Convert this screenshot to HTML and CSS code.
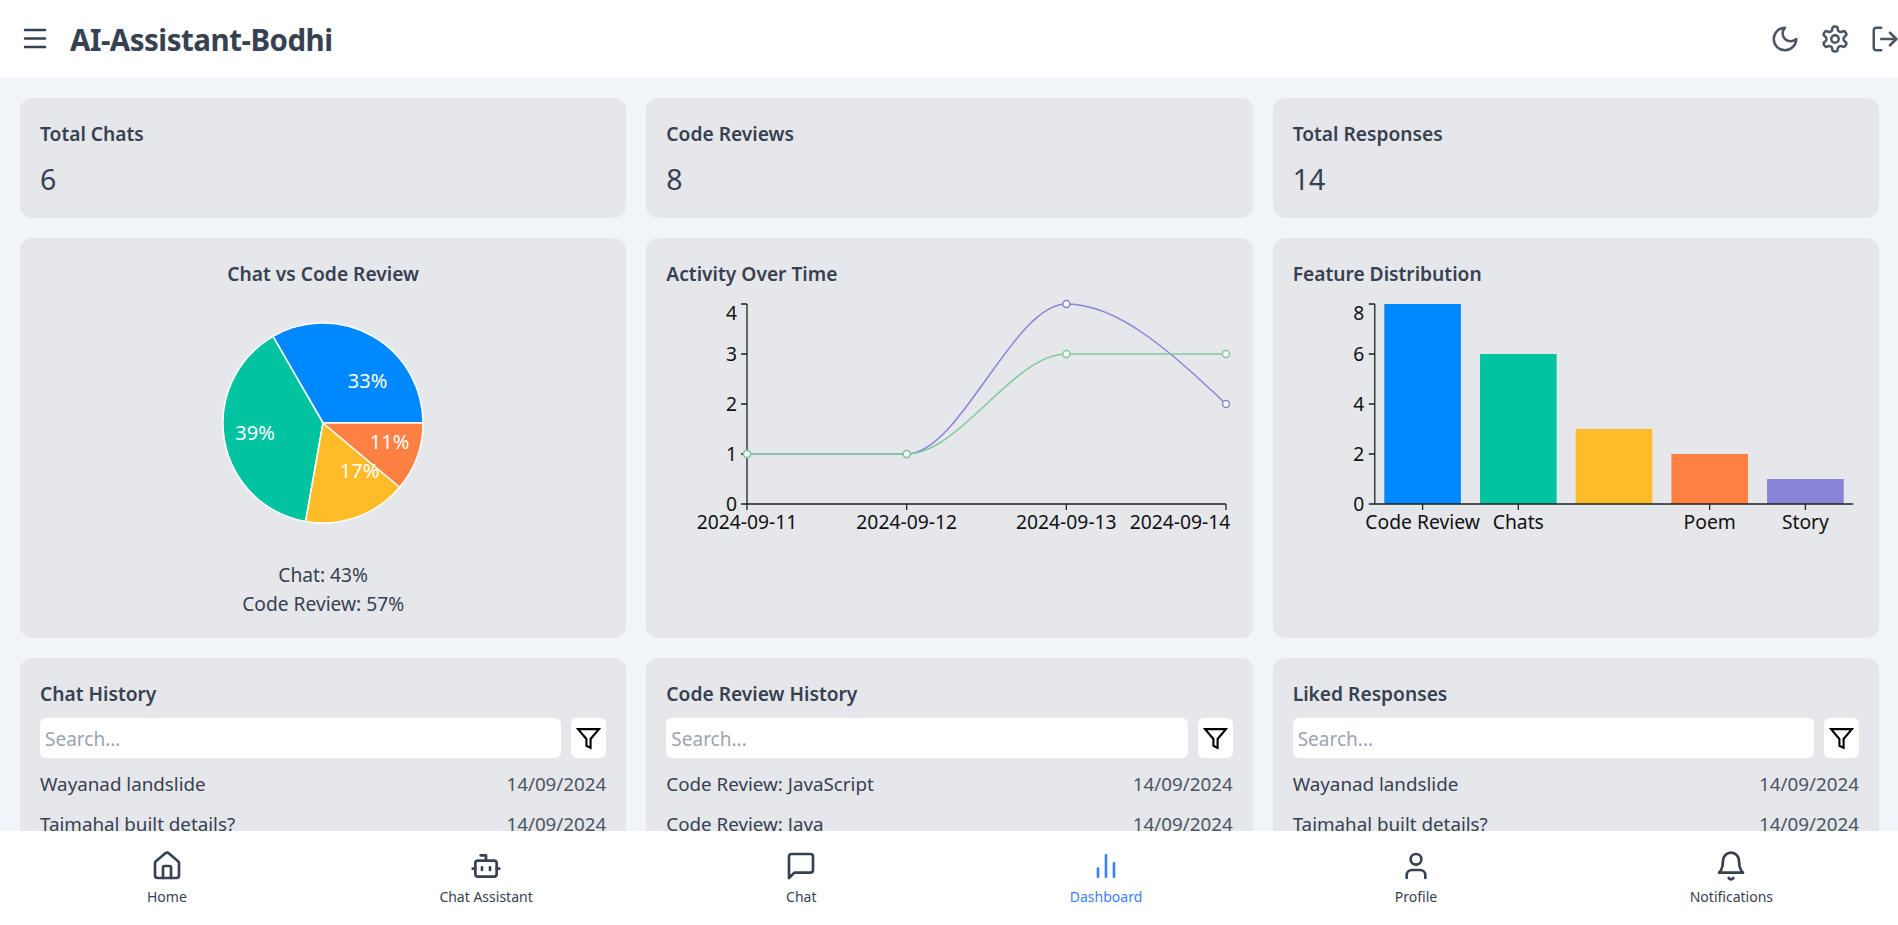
FILE: index.html
```html
<!DOCTYPE html>
<html lang="en">
<head>
    <meta charset="UTF-8">
    <meta name="viewport" content="width=device-width, initial-scale=1.0">
    <title>AI-Assistant-Bodhi</title>
    <link rel="stylesheet" href="styles.css">
</head>
<body>
    <header class="topbar">
        <svg class="icon menu-icon" viewBox="0 0 24 24"><path d="M4 4.8h16M4 11.6h16M4 18.4h16"/></svg>
        <h1 class="brand">AI-Assistant-Bodhi</h1>
        <div class="topbar-actions">
            <svg class="icon" viewBox="0 0 24 24"><path d="M12 3a6 6 0 0 0 9 9 9 9 0 1 1-9-9Z"/></svg>
            <svg class="icon" viewBox="0 0 24 24"><path d="M12.22 2h-.44a2 2 0 0 0-2 2v.18a2 2 0 0 1-1 1.73l-.43.25a2 2 0 0 1-2 0l-.15-.08a2 2 0 0 0-2.73.73l-.22.38a2 2 0 0 0 .73 2.73l.15.1a2 2 0 0 1 1 1.72v.51a2 2 0 0 1-1 1.74l-.15.09a2 2 0 0 0-.73 2.73l.22.38a2 2 0 0 0 2.73.73l.15-.08a2 2 0 0 1 2 0l.43.25a2 2 0 0 1 1 1.73V20a2 2 0 0 0 2 2h.44a2 2 0 0 0 2-2v-.18a2 2 0 0 1 1-1.73l.43-.25a2 2 0 0 1 2 0l.15.08a2 2 0 0 0 2.73-.73l.22-.39a2 2 0 0 0-.73-2.73l-.15-.08a2 2 0 0 1-1-1.74v-.5a2 2 0 0 1 1-1.74l.15-.09a2 2 0 0 0 .73-2.73l-.22-.38a2 2 0 0 0-2.73-.73l-.15.08a2 2 0 0 1-2 0l-.43-.25a2 2 0 0 1-1-1.73V4a2 2 0 0 0-2-2z"/><circle cx="12" cy="12" r="3"/></svg>
            <svg class="icon" viewBox="0 0 24 24"><path d="M9 21H5a2 2 0 0 1-2-2V5a2 2 0 0 1 2-2h4"/><path d="M16 17l5-5-5-5"/><path d="M21 12H9"/></svg>
        </div>
    </header>

    <main class="dashboard">
        <section class="card">
            <h2 class="card-title">Total Chats</h2>
            <p class="stat">6</p>
        </section>
        <section class="card">
            <h2 class="card-title">Code Reviews</h2>
            <p class="stat">8</p>
        </section>
        <section class="card">
            <h2 class="card-title">Total Responses</h2>
            <p class="stat">14</p>
        </section>

        <section class="card">
            <h2 class="card-title centered">Chat vs Code Review</h2>
            <svg class="chart" viewBox="0 0 566 266">
                <g stroke="#fff" stroke-width="1.5">
                    <path fill="#0088fe" d="M283 129 L383 129 A100 100 0 0 0 233 42.4 Z"/>
                    <path fill="#00c49f" d="M283 129 L233 42.4 A100 100 0 0 0 265.6 227.5 Z"/>
                    <path fill="#ffbb28" d="M283 129 L265.6 227.5 A100 100 0 0 0 359.6 193.3 Z"/>
                    <path fill="#ff8042" d="M283 129 L359.6 193.3 A100 100 0 0 0 383 129 Z"/>
                </g>
                <g class="pie-label">
                    <text x="327.5" y="94">33%</text>
                    <text x="215" y="146">39%</text>
                    <text x="349.5" y="155">11%</text>
                    <text x="319.5" y="184">17%</text>
                </g>
            </svg>
            <div class="legend">
                <div>Chat: 43%</div>
                <div>Code Review: 57%</div>
            </div>
        </section>

        <section class="card">
            <h2 class="card-title">Activity Over Time</h2>
            <svg class="chart" viewBox="0 0 566 266">
                <path class="axis" d="M81 10V210H560M75 10h6M75 60h6M75 110h6M75 160h6M75 210h6M81 210v6M240.67 210v6M400.33 210v6M560 210v6"/>
                <g class="tick-label tick-y">
                    <text x="71" y="26">4</text>
                    <text x="71" y="67">3</text>
                    <text x="71" y="117">2</text>
                    <text x="71" y="167">1</text>
                    <text x="71" y="217">0</text>
                </g>
                <g class="tick-label tick-x">
                    <text x="81" y="235">2024-09-11</text>
                    <text x="240.67" y="235">2024-09-12</text>
                    <text x="400.33" y="235">2024-09-13</text>
                    <text x="514" y="235">2024-09-14</text>
                </g>
                <path class="line" stroke="#8884d8" d="M81 160H240.67C293.9 160 347.1 10 400.33 10C453.55 10 506.78 60 560 110"/>
                <path class="line" stroke="#82ca9d" d="M81 160H240.67C293.9 160 347.1 60 400.33 60H560"/>
                <g class="dot" stroke="#8884d8">
                    <circle cx="81" cy="160" r="3.5"/>
                    <circle cx="240.67" cy="160" r="3.5"/>
                    <circle cx="400.33" cy="10" r="3.5"/>
                    <circle cx="560" cy="110" r="3.5"/>
                </g>
                <g class="dot" stroke="#82ca9d">
                    <circle cx="81" cy="160" r="3.5"/>
                    <circle cx="240.67" cy="160" r="3.5"/>
                    <circle cx="400.33" cy="60" r="3.5"/>
                    <circle cx="560" cy="60" r="3.5"/>
                </g>
            </svg>
        </section>

        <section class="card">
            <h2 class="card-title">Feature Distribution</h2>
            <svg class="chart" viewBox="0.7 0 566 266">
                <rect x="92" y="10" width="76.6" height="200" fill="#0088fe"/>
                <rect x="187.7" y="60" width="76.6" height="150" fill="#00c49f"/>
                <rect x="283.4" y="135" width="76.6" height="75" fill="#ffbb28"/>
                <rect x="379.1" y="160" width="76.6" height="50" fill="#ff8042"/>
                <rect x="474.8" y="185" width="76.6" height="25" fill="#8884d8"/>
                <path class="axis" d="M82.5 10V210H561M76.5 10h6M76.5 60h6M76.5 110h6M76.5 160h6M76.5 210h6M130.3 210v6M226 210v6M417.4 210v6M513.1 210v6"/>
                <g class="tick-label tick-y">
                    <text x="72" y="26">8</text>
                    <text x="72" y="67">6</text>
                    <text x="72" y="117">4</text>
                    <text x="72" y="167">2</text>
                    <text x="72" y="217">0</text>
                </g>
                <g class="tick-label tick-x">
                    <text x="130.3" y="235">Code Review</text>
                    <text x="226" y="235">Chats</text>
                    <text x="417.4" y="235">Poem</text>
                    <text x="513.1" y="235">Story</text>
                </g>
            </svg>
        </section>

        <section class="card">
            <h2 class="card-title">Chat History</h2>
            <div class="search-row">
                <input class="search" type="text" placeholder="Search...">
                <button class="filter-btn"><svg class="filter-icon" viewBox="0 0 24 24"><path d="M22 3H2l8 9.46V19l4 2v-8.54L22 3z"/></svg></button>
            </div>
            <ul class="history">
                <li><span>Wayanad landslide</span><span class="date">14/09/2024</span></li>
                <li><span>Taimahal built details?</span><span class="date">14/09/2024</span></li>
            </ul>
        </section>
        <section class="card">
            <h2 class="card-title">Code Review History</h2>
            <div class="search-row">
                <input class="search" type="text" placeholder="Search...">
                <button class="filter-btn"><svg class="filter-icon" viewBox="0 0 24 24"><path d="M22 3H2l8 9.46V19l4 2v-8.54L22 3z"/></svg></button>
            </div>
            <ul class="history">
                <li><span>Code Review: JavaScript</span><span class="date">14/09/2024</span></li>
                <li><span>Code Review: Java</span><span class="date">14/09/2024</span></li>
            </ul>
        </section>
        <section class="card">
            <h2 class="card-title">Liked Responses</h2>
            <div class="search-row">
                <input class="search" type="text" placeholder="Search...">
                <button class="filter-btn"><svg class="filter-icon" viewBox="0 0 24 24"><path d="M22 3H2l8 9.46V19l4 2v-8.54L22 3z"/></svg></button>
            </div>
            <ul class="history">
                <li><span>Wayanad landslide</span><span class="date">14/09/2024</span></li>
                <li><span>Taimahal built details?</span><span class="date">14/09/2024</span></li>
            </ul>
        </section>
    </main>

    <nav class="bottom-nav">
        <a class="nav-item">
            <svg class="icon nav-icon" viewBox="0 0 24 24"><path d="M15 21v-8a1 1 0 0 0-1-1h-4a1 1 0 0 0-1 1v8"/><path d="M3 10a2 2 0 0 1 .709-1.528l7-5.999a2 2 0 0 1 2.582 0l7 5.999A2 2 0 0 1 21 10v9a2 2 0 0 1-2 2H5a2 2 0 0 1-2-2z"/></svg>
            Home
        </a>
        <a class="nav-item">
            <svg class="icon nav-icon" viewBox="0 0 24 24"><path d="M12 8V4H8"/><rect x="4" y="8" width="16" height="12" rx="2"/><path d="M2 14h2M20 14h2M15 13v2M9 13v2"/></svg>
            Chat Assistant
        </a>
        <a class="nav-item">
            <svg class="icon nav-icon" viewBox="0 0 24 24"><path d="M21 15a2 2 0 0 1-2 2H7l-4 4V5a2 2 0 0 1 2-2h14a2 2 0 0 1 2 2z"/></svg>
            Chat
        </a>
        <a class="nav-item active">
            <svg class="icon nav-icon" viewBox="0 0 24 24"><path d="M18 20V10M12 20V4M6 20v-6"/></svg>
            Dashboard
        </a>
        <a class="nav-item">
            <svg class="icon nav-icon" viewBox="0 0 24 24"><path d="M19 21v-2a4 4 0 0 0-4-4H9a4 4 0 0 0-4 4v2"/><circle cx="12" cy="7" r="4"/></svg>
            Profile
        </a>
        <a class="nav-item">
            <svg class="icon nav-icon" viewBox="0 0 24 24"><path d="M6 8a6 6 0 0 1 12 0c0 7 3 9 3 9H3s3-2 3-9"/><path d="M10.3 21a1.94 1.94 0 0 0 3.4 0"/></svg>
            Notifications
        </a>
    </nav>
</body>
</html>
```

FILE: styles.css
```css
* {
    box-sizing: border-box;
}
html, body {
    height: 100%;
}
body {
    margin: 0;
    display: flex;
    flex-direction: column;
    overflow: hidden;
    font-family: 'Noto Sans', sans-serif;
    background: #f1f5f9;
    color: #374151;
}

.icon {
    width: 30px;
    height: 30px;
    fill: none;
    stroke: #4b5563;
    stroke-width: 2;
    stroke-linecap: round;
    stroke-linejoin: round;
    flex: none;
}
.menu-icon {
    stroke: #374151;
}

/* top bar */
.topbar {
    flex: none;
    height: 78px;
    display: flex;
    align-items: center;
    gap: 20px;
    padding-left: 20px;
    background: #fff;
}
.brand {
    margin: 0;
    font-size: 29.5px;
    font-weight: 700;
    letter-spacing: -0.5px;
    color: #374151;
}
.topbar-actions {
    margin-left: auto;
    margin-right: -2px;
    display: flex;
    gap: 20px;
}

/* cards */
.dashboard {
    flex: 1;
    min-height: 0;
    overflow: hidden;
    display: grid;
    grid-template-columns: repeat(3, 1fr);
    grid-auto-rows: min-content;
    gap: 20px;
    padding: 20px 19px 20px 20px;
}
.card {
    background: #e5e7eb;
    border-radius: 12px;
    padding: 20px;
}
.card-title {
    margin: 0;
    padding-top: 3px;
    font-size: 19.2px;
    line-height: 25px;
    font-weight: 600;
    color: #374151;
}
.card-title.centered {
    text-align: center;
}
.stat {
    margin: 15px 0 0;
    padding-bottom: 1px;
    font-size: 28.5px;
    line-height: 36px;
}

/* charts */
.chart {
    display: block;
    width: 566px;
    height: 266px;
    margin-top: 8px;
}
.legend {
    text-align: center;
    font-size: 19.2px;
    line-height: 29px;
}
.pie-label text {
    fill: #fff;
    font-size: 20px;
    text-anchor: middle;
}
.axis {
    fill: none;
    stroke: #222;
    stroke-width: 1.3;
}
.line {
    fill: none;
    stroke-width: 1.5;
}
.dot circle {
    fill: #fff;
    stroke-width: 1.5;
}
.tick-label text {
    fill: #111;
    font-size: 19.3px;
}
.tick-y text {
    text-anchor: end;
}
.tick-x text {
    text-anchor: middle;
}

/* history lists */
.search-row {
    display: flex;
    gap: 10px;
    margin-top: 12px;
}
.search {
    flex: 1;
    height: 40px;
    min-width: 0;
    border: none;
    border-radius: 6px;
    padding: 1px 5px 0;
    background: #fff;
    font: 19px 'Noto Sans', sans-serif;
    color: #374151;
}
.search::placeholder {
    color: #9ca3af;
}
.filter-btn {
    width: 35px;
    height: 40px;
    padding: 0;
    border: none;
    border-radius: 6px;
    background: #fff;
    display: flex;
    align-items: center;
    justify-content: center;
}
.filter-icon {
    width: 25px;
    height: 25px;
    fill: none;
    stroke: #000;
    stroke-width: 2;
}
.history {
    list-style: none;
    margin: 6px 0 0;
    padding: 0;
}
.history li {
    display: flex;
    justify-content: space-between;
    align-items: center;
    height: 40px;
    font-size: 18.8px;
}
.date {
    color: #4b5563;
}

/* bottom nav */
.bottom-nav {
    flex: none;
    height: 94px;
    display: flex;
    justify-content: space-between;
    padding: 19px 125px 0 147px;
    background: #fff;
    position: relative;
}
.nav-item {
    display: flex;
    flex-direction: column;
    align-items: center;
    gap: 5px;
    font-size: 14px;
    line-height: 20px;
    color: #374151;
}
.nav-icon {
    width: 32px;
    height: 32px;
}
.nav-item .nav-icon {
    stroke: #374151;
}
.nav-item.active {
    color: #3b82f6;
}
.nav-item.active .nav-icon {
    stroke: #3b82f6;
}
```
